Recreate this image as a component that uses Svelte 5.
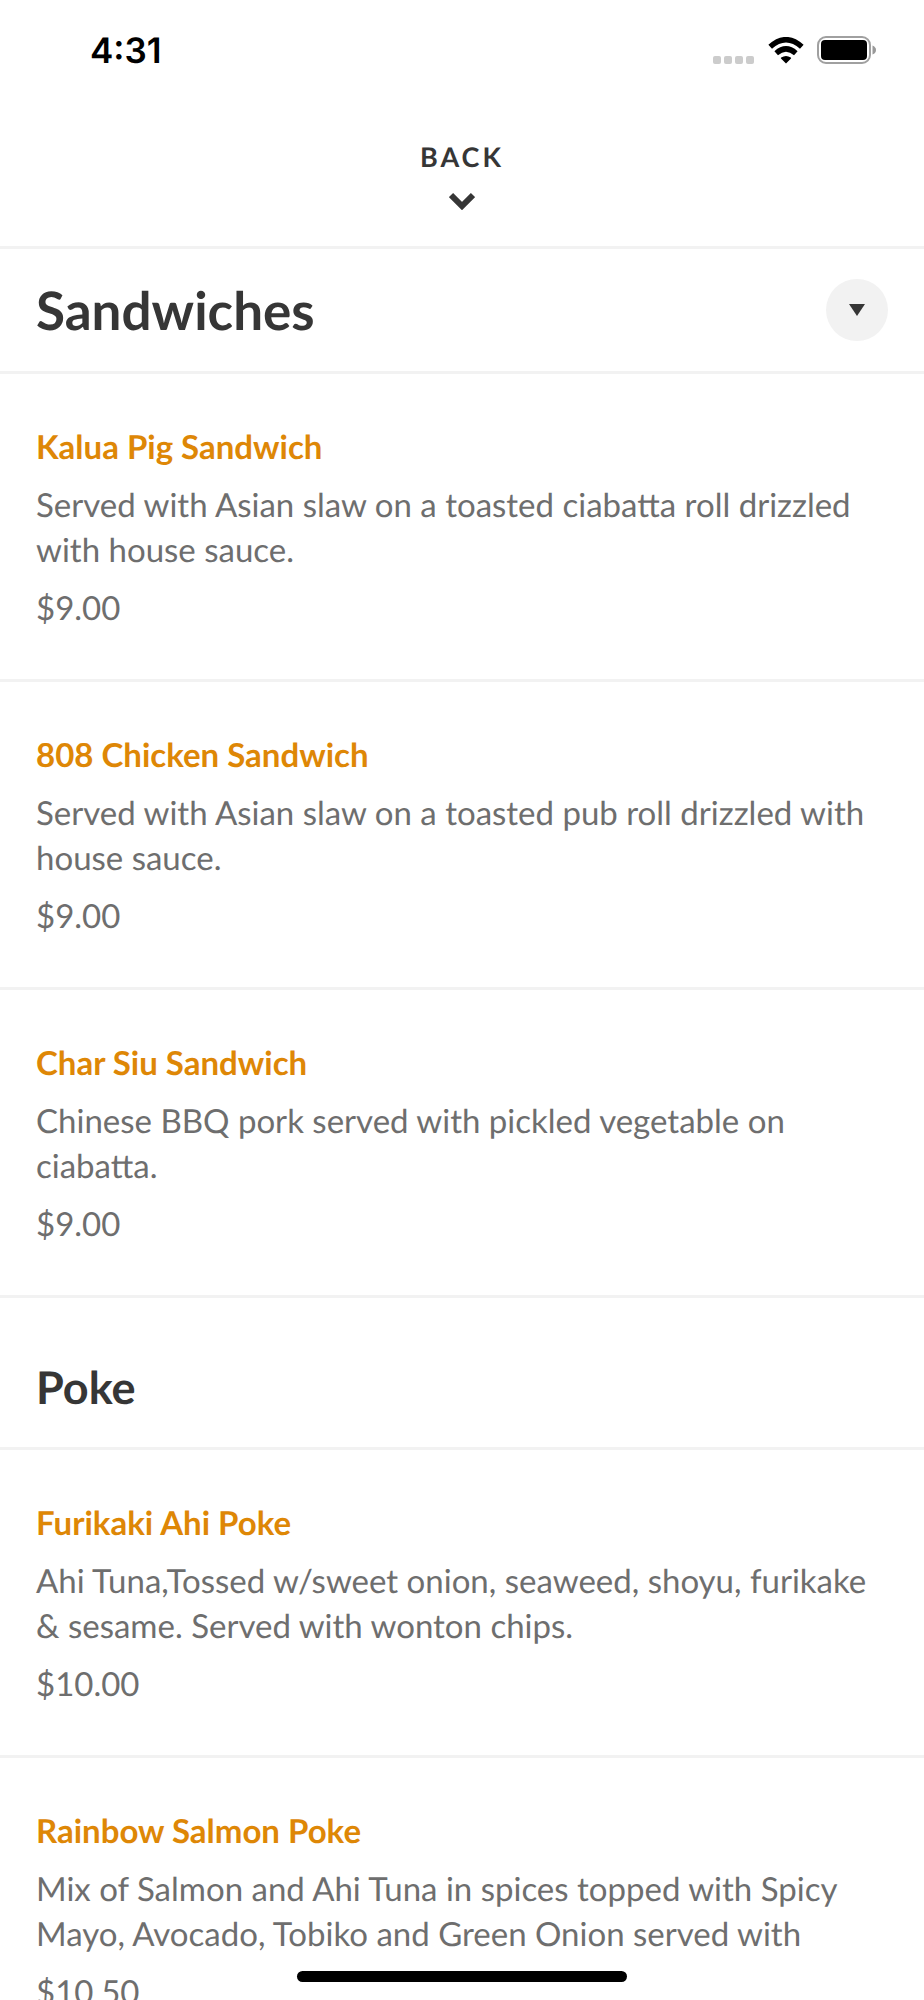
<script lang="ts">
  type Item = { name: string; text: string; price: string };

  const sandwiches: Item[] = [
    { name: 'Kalua Pig Sandwich', text: 'Served with Asian slaw on a toasted ciabatta roll drizzled with house sauce.', price: '$9.00' },
    { name: '808 Chicken Sandwich', text: 'Served with Asian slaw on a toasted pub roll drizzled with house sauce.', price: '$9.00' },
    { name: 'Char Siu Sandwich', text: 'Chinese BBQ pork served with pickled vegetable on ciabatta.', price: '$9.00' },
  ];
  const poke: Item[] = [
    { name: 'Furikaki Ahi Poke', text: 'Ahi Tuna,Tossed w/sweet onion, seaweed, shoyu, furikake & sesame. Served with wonton chips.', price: '$10.00' },
    { name: 'Rainbow Salmon Poke', text: 'Mix of Salmon and Ahi Tuna in spices topped with Spicy Mayo, Avocado, Tobiko and Green Onion served with', price: '$10.50' },
  ];
</script>

{#snippet list(items: Item[])}
  <ul>
    {#each items as item}
      <li>
        <h3>{item.name}</h3>
        <p>{item.text}</p>
        <p class="price">{item.price}</p>
      </li>
    {/each}
  </ul>
{/snippet}

<div class="screen">
  <div class="status">
    <time>4:31</time>
    <div class="indicators">
      <svg width="42" height="8" viewBox="0 0 42 8" fill="#ccc" aria-hidden="true">
        <rect width="8" height="8" rx="2" />
        <rect x="11" width="8" height="8" rx="2" />
        <rect x="22" width="8" height="8" rx="2" />
        <rect x="33" width="8" height="8" rx="2" />
      </svg>
      <svg width="36" height="27" viewBox="0 0 36 27" aria-hidden="true">
        <path d="M18 26.500 13 21.500Q12.600 21 13.200 20.600Q18 17.400 22.800 20.600Q23.400 21 23 21.500Z" />
        <path d="M2.200 9.800Q18-4.400 33.800 9.800M8.200 16.200Q18 7.600 27.800 16.200" fill="none" stroke="#000" stroke-width="5.400" />
      </svg>
      <svg width="59" height="28" viewBox="0 0 59 28" aria-hidden="true">
        <rect x="1" y="1" width="52" height="26" rx="8" fill="none" stroke="#a0a0a0" stroke-width="2" />
        <rect x="4" y="4" width="46" height="20" rx="4" />
        <path d="M55.500 9.500Q59 11 59 14T55.500 18.500Z" fill="#999" />
      </svg>
    </div>
  </div>

  <button class="back">
    BACK
    <svg width="26" height="18" viewBox="0 0 26 18" aria-hidden="true">
      <path d="m2 3 11 11L24 3" fill="none" stroke="#363636" stroke-width="6" />
    </svg>
  </button>

  <header>
    <h1>Sandwiches</h1>
    <button class="toggle" aria-label="Choose a section">
      <svg width="16" height="12" viewBox="0 0 16 12" fill="#363636" aria-hidden="true"><path d="M0 0h16L8 12Z" /></svg>
    </button>
  </header>

  {@render list(sandwiches)}
  <h2>Poke</h2>
  {@render list(poke)}

  <div class="home"></div>
</div>

<style>
  :global(body) {
    background: #fff;
  }
  .screen {
    box-sizing: border-box;
    height: 100vh;
    overflow: hidden;
    position: relative;
    font-family: Lato, sans-serif;
    color: #363636;
    text-rendering: geometricPrecision;
  }
  .status {
    display: flex;
    align-items: center;
    justify-content: space-between;
    height: 100px;
    padding: 0 48px 0 90px;
  }
  time {
    padding-top: 2px;
    font: 600 35px/44px Inter, sans-serif;
    color: #000;
  }
  .indicators {
    display: flex;
    align-items: center;
    gap: 13px;
  }
  .indicators svg:first-child {
    margin-top: 19px;
  }
  button {
    border: 0;
    padding: 0;
    font-family: inherit;
    color: inherit;
    text-rendering: inherit;
    cursor: pointer;
  }
  .back {
    display: flex;
    flex-direction: column;
    align-items: center;
    gap: 18px;
    width: 100%;
    height: 146px;
    padding-top: 40px;
    background: none;
    font-size: 27px;
    font-weight: 700;
    line-height: 34px;
    letter-spacing: 3px;
  }
  header {
    display: flex;
    align-items: center;
    justify-content: space-between;
    box-sizing: border-box;
    height: 128px;
    padding: 0 36px;
    border: solid #f2f2f2;
    border-width: 3px 0;
  }
  h1, h2, h3, p, ul {
    margin: 0;
    padding: 0;
  }
  h1 {
    padding-top: 2px;
    font-size: 53px;
    line-height: 64px;
  }
  .toggle {
    display: flex;
    align-items: center;
    justify-content: center;
    width: 62px;
    height: 62px;
    border-radius: 50%;
    background: #f2f2f2;
  }
  ul {
    list-style: none;
  }
  li {
    padding: 51px 36px 48px;
    border-bottom: 3px solid #f2f2f2;
  }
  h3 {
    margin-bottom: 13px;
    font-size: 33px;
    line-height: 45px;
    color: #de8706;
  }
  p {
    font-size: 33px;
    line-height: 45px;
    color: #6e6e6e;
  }
  .price {
    margin-top: 13px;
  }
  h2 {
    padding: 61px 36px 31px;
    border-bottom: 3px solid #f2f2f2;
    font-size: 45px;
    line-height: 57px;
  }
  .home {
    position: absolute;
    bottom: 18px;
    left: 50%;
    width: 330px;
    height: 11px;
    border-radius: 6px;
    background: #000;
    transform: translateX(-50%);
  }
</style>
